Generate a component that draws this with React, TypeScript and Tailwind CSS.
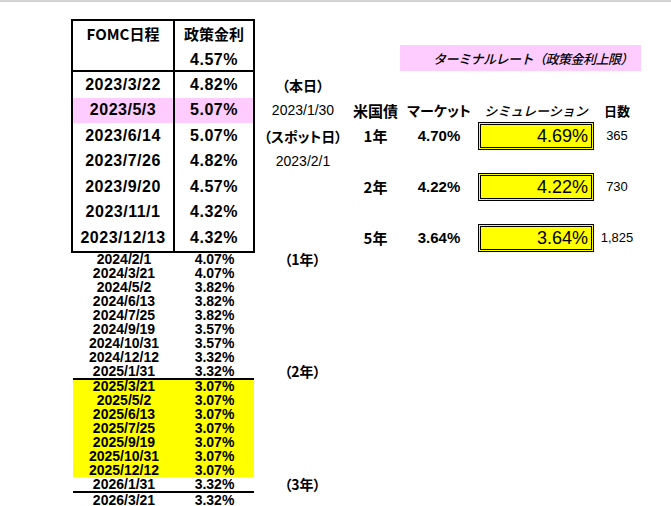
import React from "react";

const LAT = "font-['Liberation_Sans','Noto_Sans_CJK_JP',sans-serif]";
const JPF = "font-['Noto_Sans_CJK_JP','Liberation_Sans',sans-serif]";
const JP = `${JPF} [font-feature-settings:'palt']`;

type RC = {
  label?: React.ReactNode;
  a?: React.ReactNode;
  b?: React.ReactNode;
  c?: React.ReactNode;
  d?: React.ReactNode;
};

function Right({ label, a, b, c, d }: RC) {
  return (
    <div className="flex items-center h-full">
      <div className="w-[96px] flex justify-center">{label}</div>
      <div className="w-[49px] flex justify-center">{a}</div>
      <div className="w-[78px] flex justify-center">{b}</div>
      <div className="w-[116px] flex justify-center">{c}</div>
      <div className="w-[46px] flex justify-center">{d}</div>
    </div>
  );
}

function Box({ v }: { v: string }) {
  return (
    <div className={`w-[116px] h-[28px] border-[3px] border-double border-black bg-[#ffff00] flex items-center justify-end pr-[3px] text-[18px] leading-none ${LAT}`}>
      {v}
    </div>
  );
}

const jpB = `${JP} font-bold text-[14px] leading-none`;
const kB = `${JPF} font-bold text-[15px] leading-none`;
const latB = `${LAT} font-bold text-[15px] leading-none`;
const latR = `${LAT} text-[14px] leading-none`;
const numR = `${LAT} text-[13px] leading-none`;

const topRows: { d: string; r: string; pink?: boolean; right: RC }[] = [
  { d: "2023/3/22", r: "4.82%", right: { label: <span className={jpB}>（本日）</span> } },
  {
    d: "2023/5/3",
    r: "5.07%",
    pink: true,
    right: {
      label: <span className={latR}>2023/1/30</span>,
      a: <span className={kB}>米国債</span>,
      b: <span className={jpB}>マーケット</span>,
      c: <span className={`${JPF} italic font-medium text-[13px] leading-none`}>シミュレーション</span>,
      d: <span className={`${JPF} font-bold text-[13px] leading-none`}>日数</span>,
    },
  },
  {
    d: "2023/6/14",
    r: "5.07%",
    right: {
      label: <span className={jpB}>（スポット日）</span>,
      a: <span className={kB}>1年</span>,
      b: <span className={latB}>4.70%</span>,
      c: <Box v="4.69%" />,
      d: <span className={numR}>365</span>,
    },
  },
  { d: "2023/7/26", r: "4.82%", right: { label: <span className={latR}>2023/2/1</span> } },
  {
    d: "2023/9/20",
    r: "4.57%",
    right: {
      a: <span className={kB}>2年</span>,
      b: <span className={latB}>4.22%</span>,
      c: <Box v="4.22%" />,
      d: <span className={numR}>730</span>,
    },
  },
  { d: "2023/11/1", r: "4.32%", right: {} },
  {
    d: "2023/12/13",
    r: "4.32%",
    right: {
      a: <span className={kB}>5年</span>,
      b: <span className={latB}>3.64%</span>,
      c: <Box v="3.64%" />,
      d: <span className={numR}>1,825</span>,
    },
  },
];

type LR = { d: string; r: string; y?: boolean; label?: string };

const list1: LR[] = [
  { d: "2024/2/1", r: "4.07%", label: "（1年）" },
  { d: "2024/3/21", r: "4.07%" },
  { d: "2024/5/2", r: "3.82%" },
  { d: "2024/6/13", r: "3.82%" },
  { d: "2024/7/25", r: "3.82%" },
  { d: "2024/9/19", r: "3.57%" },
  { d: "2024/10/31", r: "3.57%" },
  { d: "2024/12/12", r: "3.32%" },
  { d: "2025/1/31", r: "3.32%", label: "（2年）" },
];

const list2: LR[] = [
  { d: "2025/3/21", r: "3.07%", y: true },
  { d: "2025/5/2", r: "3.07%", y: true },
  { d: "2025/6/13", r: "3.07%", y: true },
  { d: "2025/7/25", r: "3.07%", y: true },
  { d: "2025/9/19", r: "3.07%", y: true },
  { d: "2025/10/31", r: "3.07%", y: true },
  { d: "2025/12/12", r: "3.07%", y: true },
  { d: "2026/1/31", r: "3.32%", label: "（3年）" },
];

const list3: LR[] = [{ d: "2026/3/21", r: "3.32%" }];

function ListRow({ row }: { row: LR }) {
  return (
    <div className="flex h-[13.9px] items-center">
      <div className={`ml-[2px] w-[181px] h-full flex items-center ${row.y ? "bg-[#ffff00]" : ""} ${LAT} font-bold text-[14px] leading-none`}>
        <div className="w-[102px] text-center">{row.d}</div>
        <div className="w-[79px] text-center">{row.r}</div>
      </div>
      <div className={`w-[97px] text-center ${jpB}`}>{row.label}</div>
    </div>
  );
}

function Line() {
  return <div className="ml-[2px] w-[181px] h-[2px] bg-black" />;
}

export default function App() {
  const tableFont = `${LAT} font-bold text-[16px] leading-none tracking-[0.5px]`;
  const hdr = `${JP} font-bold text-[15px] leading-[15px]`;
  return (
    <div className="w-[671px] h-[506px] overflow-hidden bg-white border-t-2 border-[#d4d4d4] text-black">
      <div className="pl-[71px] pt-[17px]">
        {/* header */}
        <div className="flex">
          <div className="w-[184px] h-[53px] flex border-2 border-black">
            <div className="w-[102px] border-r-2 border-black flex flex-col items-center pt-[5px]">
              <div className={hdr}>FOMC日程</div>
            </div>
            <div className="w-[78px] flex flex-col items-center pt-[5px]">
              <div className={hdr}>政策金利</div>
              <div className={`mt-[11px] leading-[16px] ${LAT} font-bold text-[16px] tracking-[0.5px]`}>4.57%</div>
            </div>
          </div>
          <div className="pt-[26px] pl-[145px]">
            <div className="w-[241px] h-[26px] bg-[#ffccff] flex items-center justify-end pr-[8px]">
              <span className={`${JPF} italic font-medium text-[13px] leading-none tracking-[-0.5px]`}>ターミナルレート（政策金利上限）</span>
            </div>
          </div>
        </div>
        {/* body rows */}
        {topRows.map((row, i) => {
          const last = i === topRows.length - 1;
          return (
            <div key={row.d} className={`flex ${last ? "h-[27.5px]" : "h-[25.5px]"}`}>
              <div
                className={`w-[184px] flex border-x-2 border-black ${last ? "border-b-2" : ""} ${row.pink ? "bg-[#ffccff]" : ""}`}
              >
                <div className={`w-[102px] border-r-2 border-black flex items-center justify-center ${tableFont}`}>{row.d}</div>
                <div className={`flex-1 flex items-center justify-center ${tableFont}`}>{row.r}</div>
              </div>
              <div className="h-[25.5px]">
                <Right {...row.right} />
              </div>
            </div>
          );
        })}
        {list1.map((r) => (
          <ListRow key={r.d} row={r} />
        ))}
        <Line />
        {list2.map((r) => (
          <ListRow key={r.d} row={r} />
        ))}
        <Line />
        {list3.map((r) => (
          <ListRow key={r.d} row={r} />
        ))}
      </div>
    </div>
  );
}
